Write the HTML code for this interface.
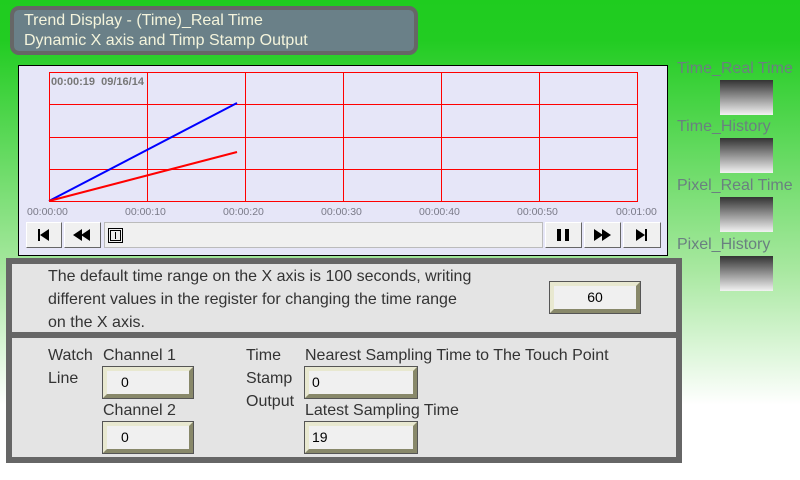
<!DOCTYPE html>
<html><head><meta charset="utf-8"><style>
*{margin:0;padding:0;box-sizing:border-box}
body{width:800px;height:480px;overflow:hidden;position:relative;font-family:"Liberation Sans",sans-serif;
background:linear-gradient(#1fcc1f 0px,#22cc22 40px,#a8e8a0 270px,#ffffff 405px,#ffffff 480px)}
.a{position:absolute}
.title{left:10px;top:6px;width:408px;height:49px;background:#6a8088;border:4px solid #666;border-radius:9px;color:#f4f4dc;font-size:16px;line-height:20px;padding:1px 0 0 10px}
.chart{left:18px;top:65px;width:650px;height:191px;background:#e6e6f8;border:1px solid #000}
.lbl{font-size:10.5px;color:#7a7a88;top:206px}
.btn{top:222px;height:26px;background:#f0f0f0;border:1px solid;border-color:#fff #666 #666 #fff}
.panel{background:#e4e4e4;border:6px solid #666}
.txt{color:#333;font-size:16px;line-height:23px}
.inp{background:#f0f0f0;border:4px solid;border-color:#e8e8d0 #88886a #88886a #e8e8d0;outline:1px solid #555;font-size:14px;color:#000;line-height:22px}
.r{color:#6a8080;font-size:16px;left:677px}
.g{left:720px;width:53px;height:35px;background:linear-gradient(#333,#f2f2f2)}
</style></head><body>
<div class="a title">Trend Display - (Time)_Real Time<br>Dynamic X axis and Timp Stamp Output</div>
<div class="a chart"></div>
<svg class="a" style="left:0;top:0" width="800" height="480">
<g stroke="#f00" stroke-width="1" fill="none" shape-rendering="crispEdges">
<rect x="49.5" y="72.5" width="588" height="129"/>
<line x1="147.5" y1="72" x2="147.5" y2="201"/><line x1="245.5" y1="72" x2="245.5" y2="201"/>
<line x1="343.5" y1="72" x2="343.5" y2="201"/><line x1="441.5" y1="72" x2="441.5" y2="201"/>
<line x1="539.5" y1="72" x2="539.5" y2="201"/>
<line x1="49" y1="104.5" x2="637" y2="104.5"/><line x1="49" y1="137.5" x2="637" y2="137.5"/>
<line x1="49" y1="169.5" x2="637" y2="169.5"/>
</g>
<line x1="49" y1="201" x2="237" y2="103" stroke="#0000ff" stroke-width="2"/>
<line x1="49" y1="201" x2="237" y2="152" stroke="#ff0000" stroke-width="2"/>
<text x="51" y="85" font-size="11" font-weight="bold" fill="#777" font-family="Liberation Sans" xml:space="preserve">00:00:19  09/16/14</text>
</svg>
<div class="a lbl" style="left:27px">00:00:00</div>
<div class="a lbl" style="left:125px">00:00:10</div>
<div class="a lbl" style="left:223px">00:00:20</div>
<div class="a lbl" style="left:321px">00:00:30</div>
<div class="a lbl" style="left:419px">00:00:40</div>
<div class="a lbl" style="left:517px">00:00:50</div>
<div class="a lbl" style="left:616px">00:01:00</div>
<div class="a btn" style="left:26px;width:36px"><svg width="34" height="24"><rect x="11" y="6" width="2" height="12"/><path d="M13 12L22 6V18Z"/></svg></div>
<div class="a btn" style="left:64px;width:37px"><svg width="35" height="24"><path d="M8 12L17 6V18Z M16 12L25 6V18Z"/></svg></div>
<div class="a" style="left:104px;top:222px;width:439px;height:26px;background:#f0f0f0;border:1px solid #bbb"><div style="position:absolute;left:3px;top:5px;width:15px;height:15px;border:1px solid #000;padding:1px"><div style="width:11px;height:11px;border:1px solid #000;position:relative"><div style="position:absolute;left:4px;top:1px;width:1px;height:7px;background:#000"></div></div></div></div>
<div class="a btn" style="left:545px;width:37px"><svg width="35" height="24"><rect x="11" y="6" width="4" height="12"/><rect x="19" y="6" width="4" height="12"/></svg></div>
<div class="a btn" style="left:584px;width:37px"><svg width="35" height="24"><path d="M9 6L18 12L9 18Z M17 6L26 12L17 18Z"/></svg></div>
<div class="a btn" style="left:623px;width:38px"><svg width="36" height="24"><path d="M12 6L21 12L12 18Z"/><rect x="21" y="6" width="2" height="12"/></svg></div>
<div class="a panel" style="left:6px;top:258px;width:676px;height:80px"></div>
<div class="a txt" style="left:48px;top:265px">The default time range on the X axis is 100 seconds, writing<br>different values in the register for changing the time range<br>on the X axis.</div>
<div class="a inp" style="left:550px;top:282px;width:90px;height:31px;text-align:center">60</div>
<div class="a panel" style="left:6px;top:332px;width:676px;height:131px"></div>
<div class="a txt" style="left:48px;top:344px">Watch<br>Line</div>
<div class="a txt" style="left:103px;top:344px">Channel 1</div>
<div class="a txt" style="left:103px;top:399px">Channel 2</div>
<div class="a inp" style="left:103px;top:367px;width:90px;height:31px;padding-left:14px">0</div>
<div class="a inp" style="left:103px;top:422px;width:90px;height:31px;padding-left:14px">0</div>
<div class="a txt" style="left:246px;top:344px">Time<br>Stamp<br>Output</div>
<div class="a txt" style="left:305px;top:344px">Nearest Sampling Time to The Touch Point</div>
<div class="a txt" style="left:305px;top:399px">Latest Sampling Time</div>
<div class="a inp" style="left:305px;top:367px;width:112px;height:31px;padding-left:3px">0</div>
<div class="a inp" style="left:305px;top:422px;width:112px;height:31px;padding-left:3px">19</div>
<div class="a r" style="top:60px">Time_Real Time</div>
<div class="a g" style="top:80px"></div>
<div class="a r" style="top:118px">Time_History</div>
<div class="a g" style="top:138px"></div>
<div class="a r" style="top:177px">Pixel_Real Time</div>
<div class="a g" style="top:197px"></div>
<div class="a r" style="top:236px">Pixel_History</div>
<div class="a g" style="top:256px"></div>
</body></html>
